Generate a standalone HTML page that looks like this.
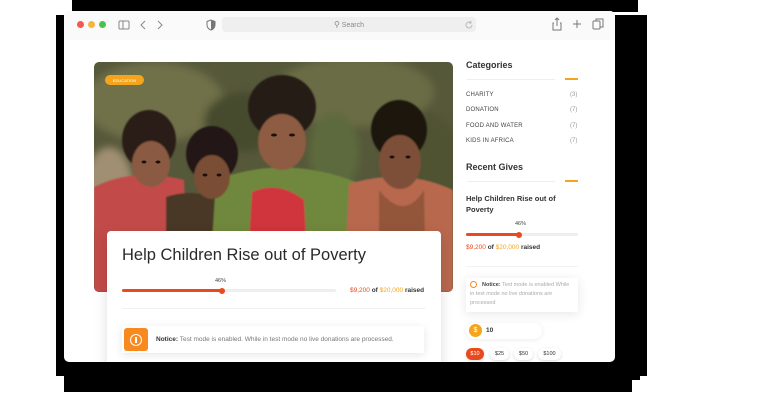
<!DOCTYPE html>
<html><head><meta charset="utf-8"><style>
*{margin:0;padding:0;box-sizing:border-box}
body{width:768px;height:416px;background:#fff;position:relative;overflow:hidden;font-family:"Liberation Sans",sans-serif;color:#222}
.b{position:absolute;background:#000}
.win{position:absolute;left:64px;top:11px;width:551px;height:351px;background:#fff;border-radius:5px;overflow:hidden}
.tb{position:absolute;left:0;top:0;width:551px;height:29px;background:#fafafa}
.dot{position:absolute;top:10px;width:7px;height:7px;border-radius:50%}
.url{position:absolute;left:158px;top:6px;width:254px;height:15px;background:#efefef;border-radius:4px;font-size:7px;color:#888;text-align:center;line-height:15px}
.a{position:absolute}
.card{position:absolute;left:43px;top:220px;width:334px;height:140px;background:#fff;border-radius:4px;box-shadow:0 4px 14px rgba(0,0,0,.12)}
.sm{font-size:6px;color:#444;letter-spacing:.2px}
.ct{font-size:6px;color:#999}
.btn{position:absolute;top:337px;height:12px;border-radius:6px;font-size:5.5px;line-height:12px;text-align:center;background:#fff;box-shadow:0 1px 3px rgba(0,0,0,.15);color:#333}
</style></head><body>
<div class="b" style="left:72px;top:0;width:566px;height:12px"></div>
<div class="b" style="left:56px;top:15px;width:12px;height:361px"></div>
<div class="b" style="left:64px;top:355px;width:568px;height:37px"></div>
<div class="b" style="left:610px;top:15px;width:37px;height:361px"></div>
<div class="b" style="left:610px;top:370px;width:30px;height:10px"></div>
<div class="win">
 <div class="tb">
  <div class="dot" style="left:13px;background:#f05a4f"></div>
  <div class="dot" style="left:24px;background:#f6b53c"></div>
  <div class="dot" style="left:35px;background:#4cc14f"></div>
  <svg class="a" style="left:54px;top:8px" width="120" height="12" viewBox="0 0 120 12" fill="none" stroke="#888" stroke-width="1"><rect x="1" y="2" width="10" height="8" rx="1"/><line x1="5" y1="2" x2="5" y2="10"/><path d="M27 2l-4 4 4 4M40 2l4 4-4 4"/></svg>
  <svg class="a" style="left:142px;top:8px" width="10" height="12" viewBox="0 0 10 12"><path d="M5 1L1 2.5v3.5c0 2.5 2 4.5 4 5 2-.5 4-2.5 4-5V2.5z" fill="none" stroke="#777"/><path d="M5 1v10c2-.5 4-2.5 4-5V2.5z" fill="#777"/></svg>
  <div class="url"><span style="font-size:8px">&#9906;</span> Search</div>
  <svg class="a" style="left:400px;top:9px" width="10" height="10" viewBox="0 0 10 10" fill="none" stroke="#bbb"><path d="M8 5a3 3 0 1 1-1-2.3M7 1v2h-2"/></svg>
  <svg class="a" style="left:487px;top:6px" width="55" height="14" viewBox="0 0 55 14" fill="none" stroke="#777" stroke-width="1"><path d="M3 6H2v7h8V6H9M6 9V1M4 3l2-2 2 2"/><path d="M26 3v8M22 7h8"/><rect x="42" y="4" width="7" height="8" rx="1"/><path d="M45 4V2h7v8h-3"/></svg>
 </div>
 <svg class="a" style="left:30px;top:51px;border-radius:5px" width="359" height="230" viewBox="0 0 359 230">
  <defs><filter id="bl"><feGaussianBlur stdDeviation="4"/></filter><filter id="b2"><feGaussianBlur stdDeviation="0.8"/></filter></defs>
  <rect width="359" height="230" fill="#56583a"/>
  <g filter="url(#bl)">
   <ellipse cx="60" cy="40" rx="70" ry="40" fill="#6f7049"/>
   <ellipse cx="260" cy="30" rx="80" ry="35" fill="#6a6c45"/>
   <ellipse cx="330" cy="110" rx="40" ry="60" fill="#4f5233"/>
   <ellipse cx="15" cy="130" rx="25" ry="45" fill="#a08f72"/>
   <ellipse cx="150" cy="60" rx="40" ry="30" fill="#474b2e"/>
   <ellipse cx="240" cy="90" rx="25" ry="40" fill="#5d6a3e"/>
  </g>
  <g filter="url(#b2)">
   <path d="M0 125 Q40 105 90 118 L95 230 L0 230Z" fill="#c24c48"/>
   <path d="M72 135 Q100 125 135 140 L132 230 L72 230Z" fill="#4a3727"/>
   <path d="M122 118 Q190 92 262 120 L262 230 L115 230Z" fill="#6f883d"/>
   <path d="M158 130 Q185 118 210 138 L215 230 L152 230Z" fill="#d0363c"/>
   <path d="M255 122 Q310 105 359 128 L359 230 L250 230Z" fill="#b8684e"/>
   <path d="M285 128 Q310 160 330 128 L332 230 L285 230Z" fill="#93573a"/>
   <ellipse cx="55" cy="78" rx="27" ry="30" fill="#2c1f17"/>
   <ellipse cx="57" cy="102" rx="19" ry="23" fill="#8a5a42"/>
   <ellipse cx="118" cy="92" rx="26" ry="28" fill="#211812"/>
   <ellipse cx="118" cy="115" rx="18" ry="22" fill="#7a4d36"/>
   <ellipse cx="188" cy="45" rx="34" ry="32" fill="#281c14"/>
   <ellipse cx="188" cy="80" rx="24" ry="28" fill="#8d5c42"/>
   <ellipse cx="305" cy="68" rx="28" ry="30" fill="#1f1610"/>
   <ellipse cx="306" cy="100" rx="21" ry="27" fill="#7e5038"/>
  </g>
  <g fill="#1a110c">
   <ellipse cx="50" cy="100" rx="2.5" ry="1.5"/><ellipse cx="64" cy="100" rx="2.5" ry="1.5"/>
   <ellipse cx="111" cy="113" rx="2.5" ry="1.5"/><ellipse cx="125" cy="113" rx="2.5" ry="1.5"/>
   <ellipse cx="180" cy="73" rx="3" ry="1.5"/><ellipse cx="198" cy="73" rx="3" ry="1.5"/>
   <ellipse cx="298" cy="95" rx="2.5" ry="1.5"/><ellipse cx="314" cy="95" rx="2.5" ry="1.5"/>
  </g>
  <rect x="11" y="13" width="39" height="10" rx="5" fill="#f5a51c"/>
  <text x="30.5" y="20" font-size="4" fill="#fff" text-anchor="middle" font-family="Liberation Sans">EDUCATION</text>
 </svg>
 <div class="card">
  <div class="a" style="left:15px;top:15px;font-size:16.5px;color:#2a2a2a">Help Children Rise out of Poverty</div>
  <div class="a" style="left:15px;top:58px;width:214px;height:3px;background:#eee;border-radius:2px"></div>
  <div class="a" style="left:15px;top:58px;width:100px;height:3px;background:#e8491d;border-radius:2px"></div>
  <div class="a" style="left:112px;top:56.5px;width:6px;height:6px;background:#e8491d;border-radius:50%"></div>
  <div class="a" style="left:108px;top:47px;font-size:5.5px;color:#444">46%</div>
  <div class="a" style="left:243px;top:56px;font-size:6.5px;font-weight:bold;color:#333"><span style="color:#e8491d;font-weight:normal">$9,200</span> of <span style="color:#f5a51c;font-weight:normal">$20,000</span> raised</div>
  <div class="a" style="left:15px;top:77px;width:303px;height:1px;background:#f0f0f0"></div>
  <div class="a" style="left:15px;top:95px;width:302px;height:27px;background:#fff;box-shadow:0 2px 8px rgba(0,0,0,.1)"></div>
  <div class="a" style="left:17px;top:97px;width:24px;height:23px;background:#f7891f;border-radius:3px"></div>
  <div class="a" style="left:23px;top:103px;width:12px;height:12px;border:1.3px solid #fff;border-radius:50%"></div>
  <div class="a" style="left:28.4px;top:106px;width:1.3px;height:6px;background:#fff"></div>
  <div class="a" style="left:49px;top:105px;font-size:6.5px;color:#777"><b style="color:#333">Notice:</b> Test mode is enabled. While in test mode no live donations are processed.</div>
 </div>
 <div class="a" style="left:402px;top:49px;font-size:9px;font-weight:bold;color:#333">Categories</div>
 <div class="a" style="left:403px;top:68px;width:88px;height:1px;background:#eee"></div>
 <div class="a" style="left:501px;top:67px;width:13px;height:2px;background:#f5a51c"></div>
 <div class="a sm" style="left:402px;top:81px">CHARITY</div><div class="a ct" style="left:506px;top:81px">(3)</div>
 <div class="a sm" style="left:402px;top:96px">DONATION</div><div class="a ct" style="left:506px;top:96px">(7)</div>
 <div class="a sm" style="left:402px;top:112px">FOOD AND WATER</div><div class="a ct" style="left:506px;top:112px">(7)</div>
 <div class="a sm" style="left:402px;top:127px">KIDS IN AFRICA</div><div class="a ct" style="left:506px;top:127px">(7)</div>
 <div class="a" style="left:402px;top:151px;font-size:9px;font-weight:bold;color:#333">Recent Gives</div>
 <div class="a" style="left:403px;top:170px;width:88px;height:1px;background:#eee"></div>
 <div class="a" style="left:501px;top:169px;width:13px;height:2px;background:#f5a51c"></div>
 <div class="a" style="left:402px;top:182px;font-size:7.5px;font-weight:bold;color:#333;line-height:11px;width:100px">Help Children Rise out of Poverty</div>
 <div class="a" style="left:451px;top:210px;font-size:5.5px;color:#444">46%</div>
 <div class="a" style="left:402px;top:222px;width:112px;height:3px;background:#eee;border-radius:2px"></div>
 <div class="a" style="left:402px;top:222px;width:53px;height:3px;background:#e8491d;border-radius:2px"></div>
 <div class="a" style="left:452px;top:220.5px;width:6px;height:6px;background:#e8491d;border-radius:50%"></div>
 <div class="a" style="left:402px;top:233px;font-size:6.5px;font-weight:bold;color:#333"><span style="color:#e8491d;font-weight:normal">$9,200</span> of <span style="color:#f5a51c;font-weight:normal">$20,000</span> raised</div>
 <div class="a" style="left:402px;top:255px;width:112px;height:1px;background:#f3f3f3"></div>
 <div class="a" style="left:402px;top:267px;width:112px;height:34px;background:#fff;box-shadow:0 2px 10px rgba(0,0,0,.1)"></div>
 <div class="a" style="left:406px;top:270px;width:7px;height:7px;border:1px solid #f7891f;border-radius:50%"></div>
 <div class="a" style="left:406px;top:270px;width:105px;font-size:5.5px;color:#aaa;line-height:9px;text-indent:12px"><b style="color:#444">Notice:</b> Test mode is enabled While in test mode no live donations are processed</div>
 <div class="a" style="left:402px;top:312px;width:76px;height:16px;background:#fff;border-radius:8px;box-shadow:0 1px 6px rgba(0,0,0,.08)"></div>
 <div class="a" style="left:405px;top:313px;width:13px;height:13px;background:#f5a51c;border-radius:50%;color:#fff;font-size:7px;text-align:center;line-height:13px">$</div>
 <div class="a" style="left:422px;top:316px;font-size:6.5px;font-weight:bold;color:#333">10</div>
 <div class="btn" style="left:402px;width:18px;background:#e8491d;color:#fff">$10</div>
 <div class="btn" style="left:426px;width:19px">$25</div>
 <div class="btn" style="left:450px;width:19px">$50</div>
 <div class="btn" style="left:474px;width:23px">$100</div>
</div>
</body></html>
